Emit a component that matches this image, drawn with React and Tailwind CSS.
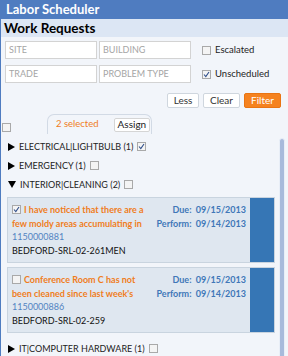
import React from "react";

const font = { fontFamily: 'Lato, "DejaVu Sans", sans-serif' };

function Box({ checked, className = "" }) {
  return (
    <span className={`inline-flex items-center justify-center w-[9px] h-[9px] border border-[#a9a9a9] bg-[#f4f4f4] shrink-0 ${className}`}>
      {checked && (
        <svg width="7" height="7" viewBox="0 0 7 7">
          <path d="M1 3.5 L2.8 5.5 L6 1" stroke="#2f4e8a" strokeWidth="1.1" fill="none" />
        </svg>
      )}
    </span>
  );
}

function Tri({ open }) {
  return open ? (
    <svg width="8" height="7" viewBox="0 0 8 7" className="shrink-0"><path d="M0 0 H8 L4 7 Z" fill="#000" /></svg>
  ) : (
    <svg width="7" height="8" viewBox="0 0 7 8" className="shrink-0"><path d="M0 0 L7 4 L0 8 Z" fill="#000" /></svg>
  );
}

function Group({ open, label, checked }) {
  return (
    <div className="flex items-center h-[19px] pl-[7px] gap-[4px] text-[9px] text-[#222] whitespace-nowrap">
      <Tri open={open} />
      <span>{label}</span>
      <Box checked={checked} />
    </div>
  );
}

function Card({ checked, l1, l2, num, loc }) {
  return (
    <div className="flex ml-[6px] mr-[13px] border border-[#c9d4df] bg-[#dfe7f0]">
      <div className="flex-1 pl-[4px] pt-[5px] pb-[5px] text-[9px] leading-[13.5px] whitespace-nowrap">
        <div className="flex justify-between">
          <div className="flex items-center gap-[3px]">
            <Box checked={checked} />
            <span className="font-bold text-[#f07d1c]">{l1}</span>
          </div>
          <div className="font-bold text-[#4077b8] pr-[4px]">Due:&nbsp; 09/15/2013</div>
        </div>
        <div className="flex justify-between">
          <span className="font-bold text-[#f07d1c]">{l2}</span>
          <div className="font-bold text-[#4077b8] pr-[4px]">Perform:&nbsp; 09/14/2013</div>
        </div>
        <div className="text-[#5284c2]">{num}</div>
        <div className="text-[#111]">{loc}</div>
      </div>
      <div className="w-[24px] bg-[#3676b5]" />
    </div>
  );
}

function Input({ ph }) {
  return (
    <div className="w-[92px] h-[18px] border border-[#d3d3d3] bg-white flex items-center pl-[3px] text-[9px] text-[#a5a5a5] whitespace-nowrap">{ph}</div>
  );
}

export default function App() {
  return (
    <div style={font} className="w-[288px] h-[356px] overflow-hidden bg-[#f2f5fa] border-l border-[#4f7cc0] relative">
      <div className="h-[19px] bg-[#4f7cc0] text-white font-bold text-[13px] flex items-center pl-[5px]">Labor Scheduler</div>
      <div className="h-[18px] bg-[#dce6f4] text-black font-bold text-[13.5px] flex items-center pl-[3px]">Work Requests</div>
      <div className="pl-[4px] pt-[4px]">
        <div className="flex items-center gap-[2px]">
          <Input ph="SITE" />
          <Input ph="BUILDING" />
          <div className="flex items-center gap-[4px] ml-[9px] text-[9.5px] text-[#222]"><Box /><span>Escalated</span></div>
        </div>
        <div className="flex items-center gap-[2px] mt-[6px]">
          <Input ph="TRADE" />
          <Input ph="PROBLEM TYPE" />
          <div className="flex items-center gap-[4px] ml-[9px] text-[9.5px] text-[#222]"><Box checked /><span>Unscheduled</span></div>
        </div>
        <div className="flex justify-end gap-[4px] pr-[7px] mt-[10px] text-[10px]">
          <div className="h-[15px] w-[32px] flex items-center justify-center bg-white border border-[#cfd6de] rounded-[2px] text-[#333]">Less</div>
          <div className="h-[15px] w-[37px] flex items-center justify-center bg-white border border-[#cfd6de] rounded-[2px] text-[#333]">Clear</div>
          <div className="h-[15px] w-[37px] flex items-center justify-center bg-[#f5821f] border border-[#e97412] rounded-[2px] text-white">Filter</div>
        </div>
      </div>
      <div className="flex items-end mt-[6px] h-[20px]">
        <Box className="ml-[1px] mb-[2px]" />
        <div className="ml-[36px] w-[105px] h-[20px] border border-b-0 border-[#d2dae5] rounded-t-[7px] flex items-center pl-[8px] gap-[15px] text-[9.5px] whitespace-nowrap">
          <span className="text-[#f07d1c]">2 selected</span>
          <span className="h-[14px] px-[3px] flex items-center bg-white border border-[#d5d5d5] rounded-[2px] text-[#222] text-[10px]">Assign</span>
        </div>
      </div>
      <div className="pt-[3px]">
        <Group label="ELECTRICAL|LIGHTBULB (1)" checked />
        <Group label="EMERGENCY (1)" />
        <Group open label="INTERIOR|CLEANING (2)" />
        <div className="mt-[3px] flex flex-col gap-[4px]">
          <Card checked l1="I have noticed that there are a" l2="few moldy areas accumulating in" num="1150000881" loc="BEDFORD-SRL-02-261MEN" />
          <Card l1="Conference Room C has not" l2="been cleaned since last week's" num="1150000886" loc="BEDFORD-SRL-02-259" />
        </div>
        <div className="mt-[6px]"><Group label="IT|COMPUTER HARDWARE (1)" /></div>
      </div>
      <div className="absolute left-[278px] top-[138px] w-[6px] h-[230px] bg-[#a8badb] rounded-t-[3px] border border-[#e8eef7]" />
    </div>
  );
}
